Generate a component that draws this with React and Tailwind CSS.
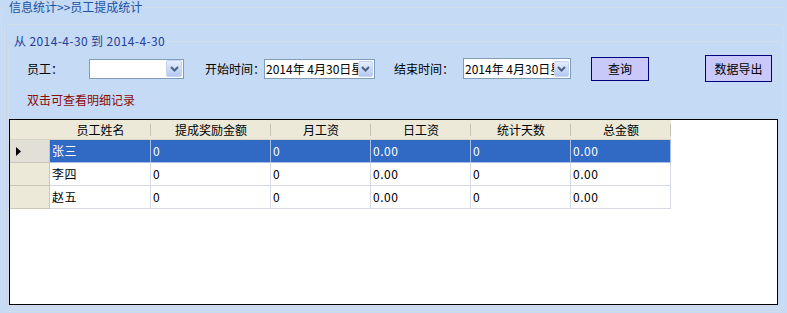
import React from 'react';

const columns = [
  { title: '员工姓名', width: 'w-[101px]' },
  { title: '提成奖励金额', width: 'w-[120px]' },
  { title: '月工资', width: 'w-[100px]' },
  { title: '日工资', width: 'w-[100px]' },
  { title: '统计天数', width: 'w-[100px]' },
  { title: '总金额', width: 'w-[100px]' },
];

const rows = [
  ['张三', '0', '0', '0.00', '0', '0.00'],
  ['李四', '0', '0', '0.00', '0', '0.00'],
  ['赵五', '0', '0', '0.00', '0', '0.00'],
];

// small blue dropdown button used by the combo box and the date pickers
function DropButton({ className }) {
  return (
    <div
      className={
        'flex items-center justify-center rounded-[2px] border border-[#c2d3f4] bg-linear-to-b from-[#e6eefd] to-[#b4c8f2] ' +
        className
      }
    >
      <svg width="9" height="6" viewBox="0 0 9 6">
        <polyline points="1,1 4.5,4.5 8,1" fill="none" stroke="#4d6185" strokeWidth="2" />
      </svg>
    </div>
  );
}

function DatePicker({ width, height }) {
  return (
    <div className={'flex items-center bg-white border border-[#7f9db9] ' + width + ' ' + height}>
      <div className="flex-1 overflow-hidden whitespace-nowrap pl-[1px] text-[12px] leading-[14px] text-black">
        2014年 4月30日星期三
      </div>
      <DropButton className="w-[15px] h-[16px] mr-[1px] shrink-0" />
    </div>
  );
}

function Grid() {
  return (
    <div className="w-[769px] h-[186px] border border-black bg-white overflow-hidden">
      {/* header */}
      <div className="flex h-[20px]">
        <div className="w-[40px] h-full bg-[#ece9d8] border-b border-[#d6d2c2]" />
        {columns.map((col) => (
          <div
            key={col.title}
            className={
              'relative h-full flex items-center justify-center bg-[#ece9d8] border-b border-[#d6d2c2] text-[12px] text-black ' +
              col.width +
              " after:absolute after:right-0 after:top-[4px] after:bottom-[3px] after:w-px after:bg-[#c5c2b2] after:content-['']"
            }
          >
            {col.title}
          </div>
        ))}
      </div>
      {/* rows */}
      {rows.map((row, i) => {
        const selected = i === 0;
        return (
          <div key={i} className="flex h-[23px]">
            <div
              className={
                'w-[40px] h-full flex items-center pl-[6px] border-b border-r border-[#cbc7b8] ' +
                (selected ? 'bg-[#e2e0d6]' : 'bg-[#ece9d8]')
              }
            >
              {selected && (
                <svg width="5" height="9" viewBox="0 0 5 9">
                  <polygon points="0,0 5,4.5 0,9" fill="#000" />
                </svg>
              )}
            </div>
            {row.map((cell, j) => (
              <div
                key={j}
                className={
                  'h-full flex items-center pl-[2px] border-b border-r text-[12px] tracking-[0.5px] ' +
                  columns[j].width +
                  (selected
                    ? ' bg-[#316ac5] text-white border-[#a9bfe6]'
                    : ' bg-white text-black border-[#d5dae2]')
                }
              >
                {cell}
              </div>
            ))}
          </div>
        );
      })}
    </div>
  );
}

export default function App() {
  return (
    <div className="w-[787px] h-[313px] overflow-hidden bg-[#c4daf5] font-['Noto_Sans_CJK_SC','Noto_Sans',sans-serif]">
      <fieldset className="ml-[1px] w-[785px] h-[312px] min-w-0 border border-[#d3dde9] rounded-[4px]">
        <legend className="ml-[5px] px-[2px] text-[12px] leading-[14px] text-[#2051a3] whitespace-nowrap">
          信息统计&gt;&gt;员工提成统计
        </legend>

        <div className="mt-[10px] ml-[2px] w-[780px] h-[285px] border border-[#d3dde9] rounded-[4px]">
          <fieldset className="mt-[9px] ml-[3px] w-[774px] h-[273px] min-w-0 border border-[#d3dde9] rounded-[3px]">
            <legend className="ml-[4px] px-[1px] text-[12px] leading-[14px] tracking-[0.4px] text-[#1f3f99] whitespace-nowrap">
              从 2014-4-30 到 2014-4-30
            </legend>

            {/* query bar */}
            <div className="mt-[7px] h-[27px] flex items-center pl-[18px] text-[12px] text-black">
              <span className="w-[62px]">员工：</span>
              <div className="w-[95px] h-[20px] flex items-center justify-end bg-white border border-[#7f9db9]">
                <DropButton className="w-[16px] h-[17px] mr-[1px]" />
              </div>
              <span className="ml-[21px] w-[59px] whitespace-nowrap">开始时间：</span>
              <DatePicker width="w-[111px]" height="h-[20px]" />
              <span className="ml-[19px] w-[69px] whitespace-nowrap">结束时间：</span>
              <DatePicker width="w-[108px]" height="h-[21px]" />
              <button className="ml-[20px] w-[58px] h-[24px] bg-[#c8c8f9] border border-[#000080] text-[12px] text-black">
                查询
              </button>
              <button className="ml-[56px] w-[67px] h-[27px] bg-[#c8c8f9] border border-[#000080] text-[12px] text-black">
                数据导出
              </button>
            </div>

            <div className="mt-[11px] pl-[18px] text-[12px] leading-[14px] text-[#8b0b0b]">
              双击可查看明细记录
            </div>

            <div className="mt-[12px]">
              <Grid />
            </div>
          </fieldset>
        </div>
      </fieldset>
    </div>
  );
}
